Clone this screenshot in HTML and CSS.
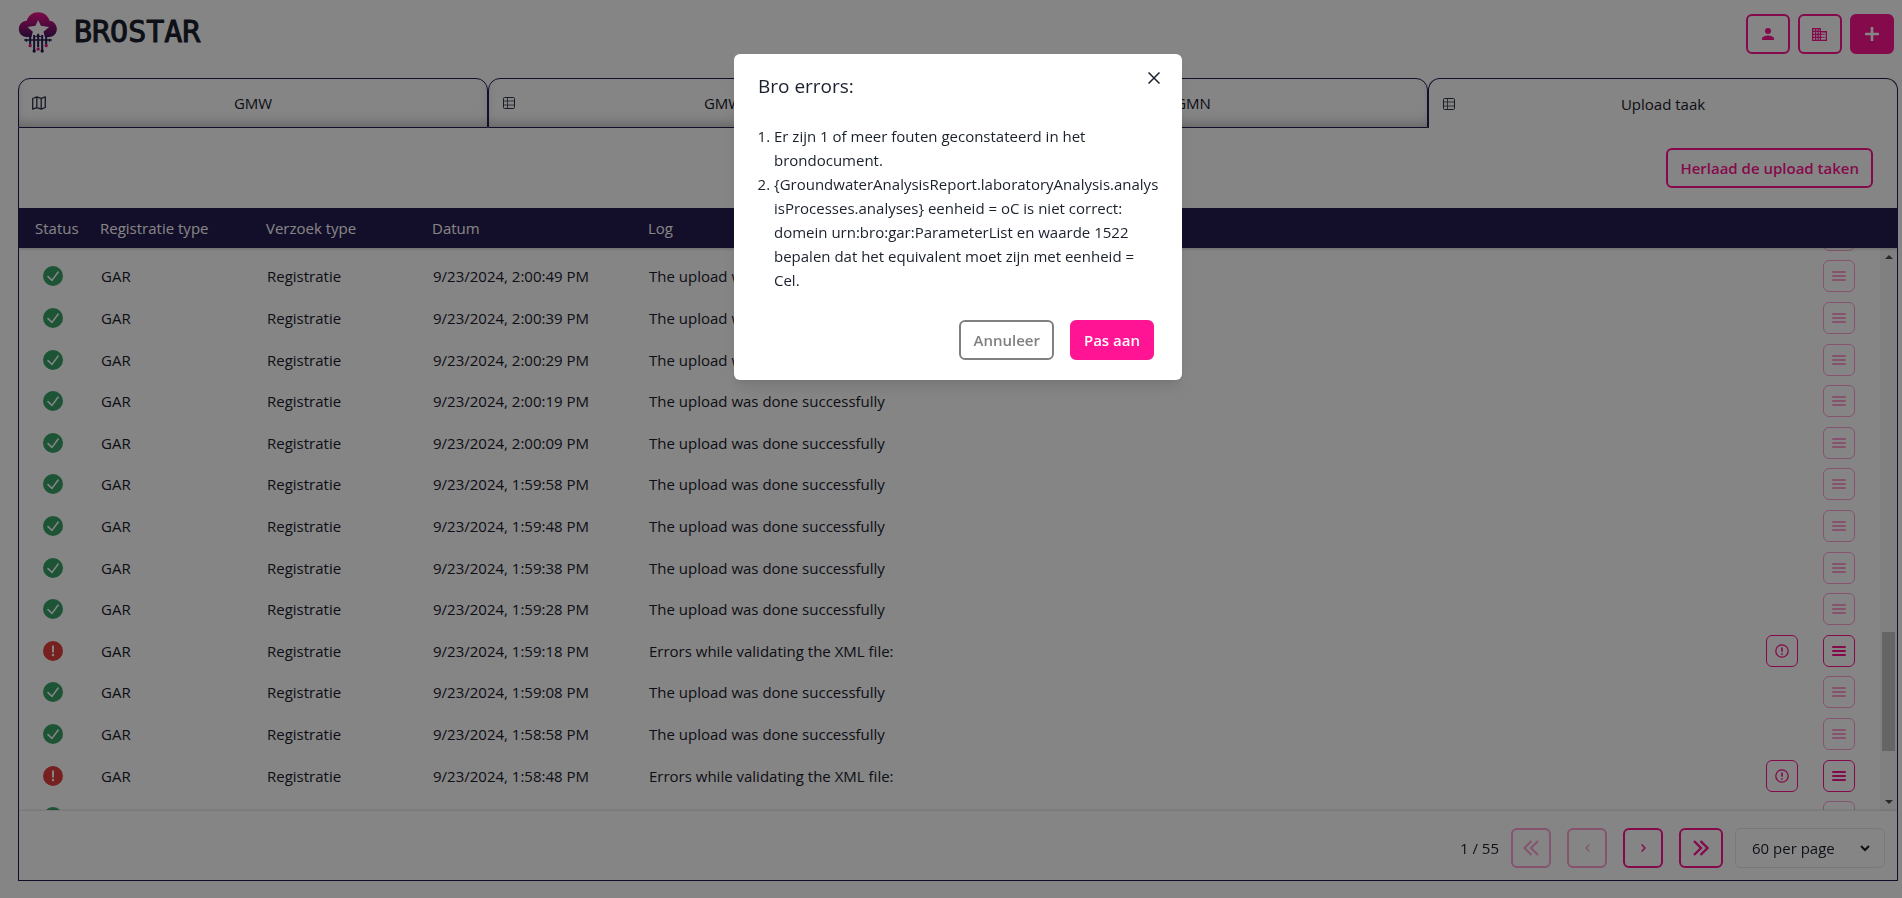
FILE: index.html
```html
<!DOCTYPE html>
<html lang="nl">
<head>
<meta charset="utf-8">
<title>BROSTAR</title>
<link rel="stylesheet" href="styles.css">
</head>
<body>
<svg class="sprite" aria-hidden="true">
  <symbol id="i-table" viewBox="0 0 12 12"><rect x=".5" y=".5" width="11" height="11" rx="1" fill="none" stroke="currentColor"/><path d="M4.500 0v12M0 4h12M0 8h12" fill="none" stroke="currentColor" stroke-width=".8"/></symbol>
  <symbol id="i-menu" viewBox="0 0 14 12"><path d="M1 2h12M1 6h12M1 10h12" stroke="currentColor" stroke-width="2" stroke-linecap="round"/></symbol>
  <symbol id="i-warn" viewBox="0 0 14 14"><circle cx="7" cy="7" r="6.2" fill="none" stroke="currentColor" stroke-width="1.3"/><path d="M7 3.500v4.200M7 9.200v1.500" stroke="currentColor" stroke-width="1.6"/></symbol>
  <symbol id="i-ok" viewBox="0 0 20 20"><circle cx="10" cy="10" r="10" fill="#38a169"/><path d="M5 10.600l4 3.800 6.200-8.400" fill="none" stroke="#fff" stroke-width="1.5" stroke-linecap="round"/></symbol>
  <symbol id="i-err" viewBox="0 0 20 20"><circle cx="10" cy="10" r="10" fill="#e53e3e"/><path d="M10 5.200v5.600" stroke="#fff" stroke-width="2" stroke-linecap="round"/><circle cx="10" cy="14" r="1.2" fill="#fff"/></symbol>
</svg>

<div class="page">
  <header class="topbar">
    <a class="brand" href="#">
      <svg class="logo" viewBox="56 29 117 123" aria-hidden="true">
        <defs><linearGradient id="cloud" x1="0" y1="0" x2="0" y2="1"><stop offset="0" stop-color="#f0148c"/><stop offset="1" stop-color="#4a1560"/></linearGradient></defs>
        <path d="M80 104c-14 0-23-11-23-24 0-14 10-25 24-25 4-15 18-25 34-25s30 10 34 25c13 1 22 12 22 25s-9 24-22 24z" fill="url(#cloud)"/>
        <path d="M115 53l8 17 25 4-17 14 5 20-21-10-21 10 5-20-16-14 24-4z" fill="#fff"/>
        <path d="M73 113h83M80 109v9M149 109v9" stroke="#261b51" stroke-width="4"/>
        <path d="M91 101v26M139 101v26M103 98v50M127 98v50M115 94v40" stroke="#261b51" stroke-width="6"/>
        <circle cx="103" cy="146" r="5" fill="#261b51"/><circle cx="127" cy="146" r="5" fill="#261b51"/>
        <circle cx="91" cy="130" r="5" fill="#e6127f"/><circle cx="139" cy="130" r="5" fill="#e6127f"/><circle cx="115" cy="140" r="5" fill="#e6127f"/>
      </svg>
      <span class="brand-name">BROSTAR</span>
    </a>
    <nav class="actions" aria-label="Acties">
      <button class="btn wide" aria-label="Profiel"><svg width="12" height="12" viewBox="0 0 12 12"><circle cx="6" cy="3" r="3" fill="currentColor"/><path d="M0 12v-1.500C0 8.500 4 7.500 6 7.500s6 1 6 3V12z" fill="currentColor"/></svg></button>
      <button class="btn wide" aria-label="Organisatie"><svg width="16" height="13" viewBox="0 0 16 13"><path fill="currentColor" fill-rule="evenodd" d="M0 0h9v3h6v10H0zM1.300 1.300v1.500h1.700V1.300zM4.200 1.300v1.500h1.300V1.300zM6.700 1.300v1.500h1.100V1.300zM1.300 4v1.700h1.700V4zM4.200 4v1.700h1.300V4zM6.700 4v1.700h1.100V4zM1.300 7v1.700h1.700V7zM4.200 7v1.700h1.300V7zM6.700 7v1.700h1.100V7zM1.300 10v1.700h1.700V10zM4.200 10v1.700h1.300V10zM6.700 10v1.700h1.100V10zM9 4.400v1.300h1.500V7H9v1.700h1.500V10H9v1.700h4.700V4.400zM11.200 5.700h1.300V7h-1.300zM11.200 8.700h1.300V10h-1.300z"/></svg></button>
      <button class="btn wide solid" aria-label="Toevoegen"><svg width="14" height="14" viewBox="0 0 14 14"><path d="M7 0v14M0 7h14" stroke="currentColor" stroke-width="2.6"/></svg></button>
    </nav>
  </header>

  <main class="main">
    <div class="tabs" role="tablist">
      <button class="tab" role="tab"><svg class="tab-icon" width="14" height="14" viewBox="0 0 14 14"><path d="M.700 2.500L4.800.800l4.400 1.500L13.300.800v10.700l-4.100 1.700-4.400-1.500-4.100 1.500zM4.800.800v10.900M9.200 2.300v10.900" fill="none" stroke="currentColor" stroke-width="1.3" stroke-linejoin="round"/></svg><span>GMW</span></button>
      <button class="tab" role="tab"><svg class="tab-icon" width="12" height="12"><use href="#i-table"/></svg><span>GMW</span></button>
      <button class="tab" role="tab"><svg class="tab-icon" width="12" height="12"><use href="#i-table"/></svg><span>GMN</span></button>
      <button class="tab active" role="tab" aria-selected="true"><svg class="tab-icon" width="12" height="12"><use href="#i-table"/></svg><span>Upload taak</span></button>
    </div>

    <section class="panel">
      <div class="toolbar"><button class="btn">Herlaad de upload taken</button></div>
      <div class="list">
        <div class="scroller" id="scroller">
          <table class="tasks">
            <colgroup><col class="c-status"><col class="c-type"><col class="c-type"><col class="c-date"><col><col class="c-act"></colgroup>
            <thead><tr><th>Status</th><th>Registratie type</th><th>Verzoek type</th><th>Datum</th><th>Log</th><th></th></tr></thead>
            <tbody id="rows"></tbody>
          </table>
        </div>
        <div class="scrollbar" aria-hidden="true">
          <svg width="8" height="4" viewBox="0 0 8 4"><path d="M0 4l4-4 4 4z" fill="#505050"/></svg>
          <div class="track"><div class="thumb"></div></div>
          <svg width="8" height="4" viewBox="0 0 8 4"><path d="M0 0l4 4 4-4z" fill="#505050"/></svg>
        </div>
      </div>
      <footer class="pager">
        <span class="count">1 / 55</span>
        <div class="pages">
          <button class="btn sq" disabled aria-label="Eerste"><svg width="16" height="16" viewBox="0 0 16 16"><path d="M8.500 1l-7 7 7 7M15 1L8 8l7 7" fill="none" stroke="currentColor" stroke-width="2"/></svg></button>
          <button class="btn sq" disabled aria-label="Vorige"><svg width="5" height="8" viewBox="0 0 5 8"><path d="M4.400.500L1 4l3.400 3.500" fill="none" stroke="currentColor" stroke-width="1.3"/></svg></button>
          <button class="btn sq" aria-label="Volgende"><svg width="5" height="8" viewBox="0 0 5 8"><path d="M.600.500L4 4 .600 7.500" fill="none" stroke="currentColor" stroke-width="1.4"/></svg></button>
          <button class="btn wide" aria-label="Laatste"><svg width="16" height="16" viewBox="0 0 16 16"><path d="M1 1l7 7-7 7M7.500 1l7 7-7 7" fill="none" stroke="currentColor" stroke-width="2.4"/></svg></button>
        </div>
        <div class="select">
          <select aria-label="Aantal per pagina"><option>60 per page</option></select>
          <svg class="chevron" width="10" height="7" viewBox="0 0 10 7"><path d="M1 1l4 4 4-4" fill="none" stroke="currentColor" stroke-width="2"/></svg>
        </div>
      </footer>
    </section>
  </main>
</div>

<div class="overlay">
  <div class="modal" role="dialog" aria-labelledby="dlg-title">
    <button class="close" aria-label="Sluiten"><svg width="12" height="12" viewBox="0 0 12 12"><path d="M.500.500l11 11M11.500.500l-11 11" stroke="currentColor" stroke-width="1.5"/></svg></button>
    <h2 id="dlg-title">Bro errors:</h2>
    <ol>
      <li>Er zijn 1 of meer fouten geconstateerd in het brondocument.</li>
      <li>{GroundwaterAnalysisReport.laboratoryAnalysis.analys<wbr>isProcesses.analyses} eenheid = oC is niet correct: domein urn:bro:gar:ParameterList en waarde 1522 bepalen dat het equivalent moet zijn met eenheid = Cel.</li>
    </ol>
    <div class="modal-actions">
      <button class="btn grey">Annuleer</button>
      <button class="btn solid">Pas aan</button>
    </div>
  </div>
</div>
<script src="app.js"></script>
</body>
</html>
```
FILE: styles.css
```css
* { box-sizing: border-box; }
body {
  margin: 0;
  font: 15px/24px "Open Sans", "Noto Sans", sans-serif;
  color: #1a202c;
  background: #fff;
}
button, select { font: inherit; color: inherit; }
.sprite { position: absolute; width: 0; height: 0; }

.page { min-height: 100vh; display: flex; flex-direction: column; padding: 0 4px 17px 18px; }
.topbar { display: flex; justify-content: space-between; align-items: flex-start; height: 78px; padding: 10px 4px 0 0; }
.brand { display: flex; align-items: center; gap: 16px; color: inherit; text-decoration: none; }
.logo { width: 40px; height: 41px; }
.brand-name { font: 30px/44px "DejaVu Sans Mono", monospace; -webkit-text-stroke: 1px currentColor; }
.actions { display: flex; gap: 8px; padding-top: 4px; }

.btn {
  display: inline-flex; align-items: center; justify-content: center;
  height: 40px; padding: 0 12px;
  border: 2px solid #ff1493; border-radius: 6px;
  background: none; color: #ff1493; font-weight: 600;
}
.btn.wide { width: 44px; padding: 0; }
.btn.sq { width: 40px; padding: 0; }
.btn.solid { background: #ff1493; color: #fff; }
.btn.grey { border-color: #808080; color: #808080; }
.btn:disabled, .row-btn:disabled { opacity: .4; }

.main { flex: 1; display: flex; flex-direction: column; }
.tabs { display: grid; grid-template-columns: repeat(4, 1fr); }
.tab {
  display: grid; grid-template-columns: 14px 1fr 14px; align-items: center;
  height: 50px; padding: 0 13px;
  border: 1px solid #261b51; border-radius: 12px 12px 0 0;
  background: #fff; box-shadow: inset 0 -8px 12px -4px rgba(0, 0, 0, .24);
}
.tab.active { border-bottom: 0; box-shadow: none; }
.tab-icon { justify-self: center; color: #2d3748; }

.panel { flex: 1; display: flex; flex-direction: column; border: 1px solid #261b51; border-top: 0; }
.toolbar { display: flex; justify-content: flex-end; padding: 20px 24px; }
.list { position: relative; flex: 1 1 0; min-height: 0; display: grid; }
.scroller { overflow: hidden; height: 602px; }
.tasks { width: 100%; height: 664px; table-layout: fixed; border-collapse: separate; border-spacing: 0; }
.c-status { width: 65px; }
.c-type { width: 166px; }
.c-date { width: 216px; }
.c-act { width: 160px; }
.tasks thead { position: sticky; top: 0; z-index: 1; box-shadow: 0 1px 3px rgba(0, 0, 0, .2); }
.tasks th { height: 40px; padding: 0 0 0 16px; background: #261b51; color: #fff; font-weight: 400; text-align: left; }
.tasks td { padding: 0 0 0 17px; vertical-align: middle; }
.tasks td:first-child { padding-left: 24px; }
.tasks td svg { display: block; }
.row-actions { display: flex; justify-content: flex-end; gap: 25px; padding-right: 42px; }
.row-btn {
  display: flex; align-items: center; justify-content: center;
  width: 32px; height: 32px; padding: 0;
  border: 1px solid #ff1493; border-radius: 6px; background: none; color: #ff1493;
}
.scrollbar {
  position: absolute; top: 40px; right: 0; bottom: 0; width: 17px;
  display: flex; flex-direction: column; align-items: center;
  padding: 7px 0; background: #f6f6f6;
}
.track { flex: 1; width: 13px; padding-top: 373px; }
.thumb { height: 119px; background: #c1c1c1; }

.pager {
  display: flex; align-items: center; justify-content: flex-end; gap: 12px;
  height: 69px; padding: 4px 12px 0 0; background: #fff;
  box-shadow: 0 -1px 2px rgba(0, 0, 0, .12); z-index: 1;
}
.pages { display: flex; gap: 16px; }
.select { position: relative; }
.select select { appearance: none; width: 150px; height: 40px; padding: 0 16px; border: 1px solid #e2e8f0; border-radius: 6px; background: #fff; }
.chevron { position: absolute; top: 17px; right: 15px; pointer-events: none; }

.overlay {
  position: fixed; inset: 0; z-index: 10; padding: 54px 0 0 14px;
  display: flex; justify-content: center; align-items: flex-start;
  background: rgba(0, 0, 0, .48);
}
.modal {
  position: relative; width: 448px; padding: 16px 24px 20px;
  border-radius: 6px; background: #fff;
  box-shadow: 0 10px 15px -3px rgba(0, 0, 0, .1), 0 4px 6px -2px rgba(0, 0, 0, .05);
}
.modal h2 { margin: 0; font-size: 19px; line-height: 32px; font-weight: 500; }
.modal ol { margin: 22px 0 28px; padding-left: 16px; }
.modal-actions { display: flex; justify-content: flex-end; gap: 16px; padding-right: 4px; }
.close { position: absolute; top: 8px; right: 12px; width: 32px; height: 32px; padding: 0; border: 0; background: none; display: grid; place-items: center; }
```
FILE: app.js
```js
const tasks = [
  [null, true], ["2:00:49", true], ["2:00:39", true], ["2:00:29", true],
  ["2:00:19", true], ["2:00:09", true], ["1:59:58", true], ["1:59:48", true],
  ["1:59:38", true], ["1:59:28", true], ["1:59:18", false], ["1:59:08", true],
  ["1:58:58", true], ["1:58:48", false], [null, true]
];

const message = ok => ok ? "The upload was done successfully" : "Errors while validating the XML file:";

document.getElementById("rows").innerHTML = tasks.map(([time, ok]) => `
  <tr>
    <td><svg width="20" height="20"><use href="#${ok ? "i-ok" : "i-err"}"/></svg></td>
    <td>${time ? "GAR" : ""}</td>
    <td>${time ? "Registratie" : ""}</td>
    <td>${time ? `9/23/2024, ${time} PM` : ""}</td>
    <td>${time ? message(ok) : ""}</td>
    <td><div class="row-actions">
      ${ok ? "" : '<button class="row-btn" aria-label="Fouten"><svg width="14" height="14"><use href="#i-warn"/></svg></button>'}
      <button class="row-btn" aria-label="Details" ${ok ? "disabled" : ""}><svg width="14" height="12"><use href="#i-menu"/></svg></button>
    </div></td>
  </tr>`).join("");

document.getElementById("scroller").scrollTop = 34;
```
